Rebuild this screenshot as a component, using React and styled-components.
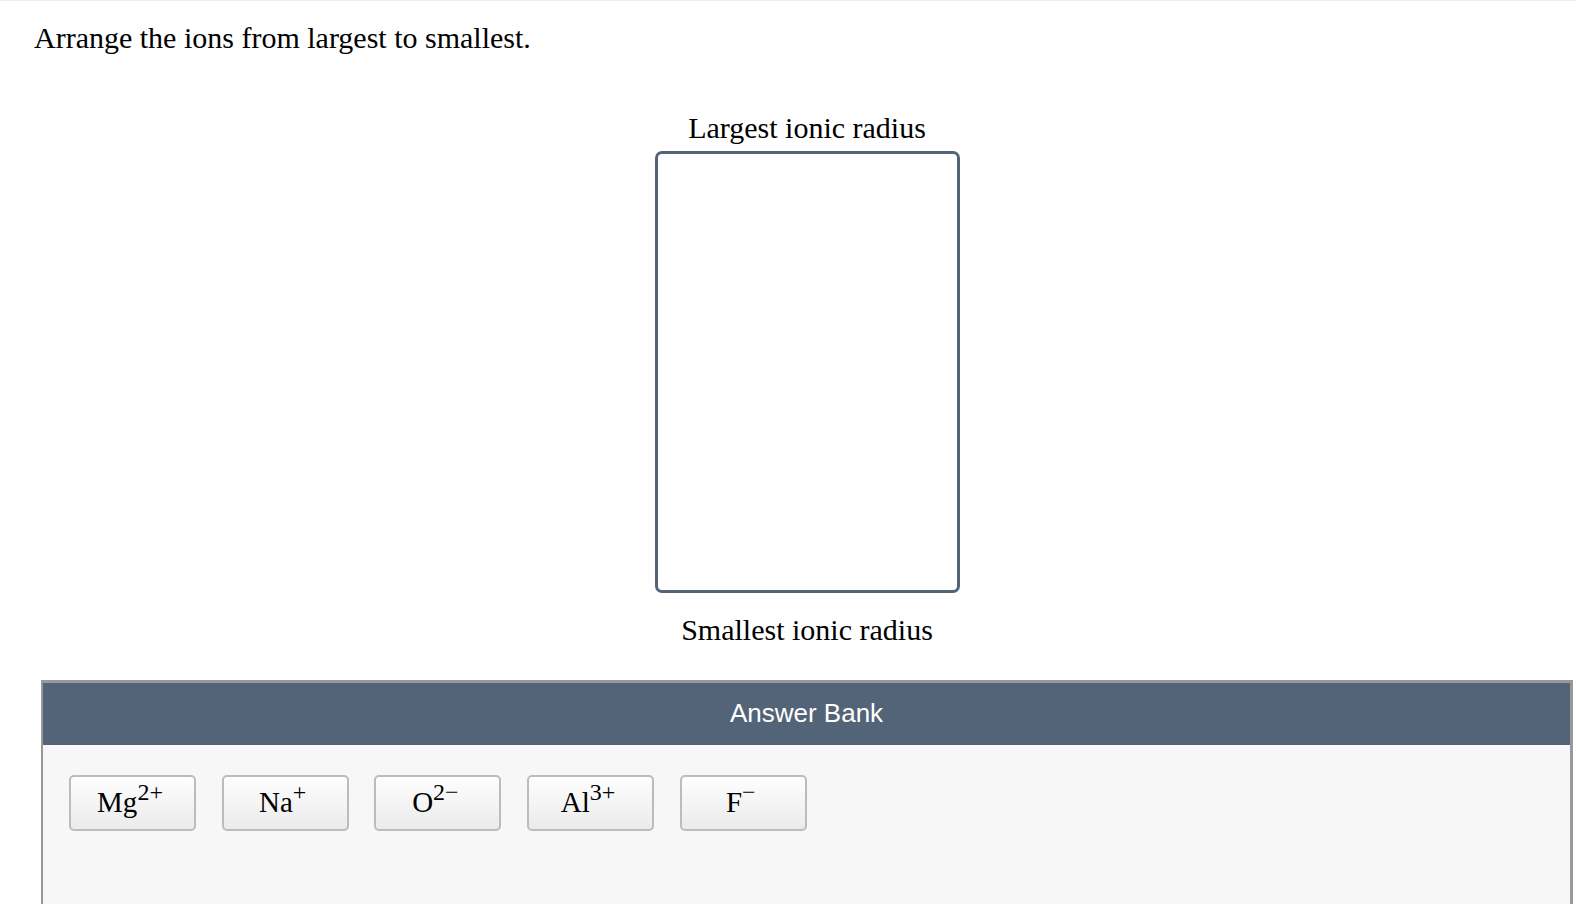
import React from "react";
import styled, { createGlobalStyle } from "styled-components";

const GlobalStyle = createGlobalStyle`
  html, body { margin: 0; padding: 0; background: #ffffff; }
  body { font-family: "Liberation Serif", "Times New Roman", serif; color: #000; }
  * { box-sizing: border-box; }
`;

const Page = styled.div`
  border-top: 1px solid #ececec;
  width: 1576px;
  height: 904px;
  overflow: hidden;
`;

const Prompt = styled.div`
  padding: 20px 0 0 34px;
  font-size: 30px;
  line-height: 34px;
`;

const Workspace = styled.div`
  margin: 0 3px 0 41px;
  display: flex;
  flex-direction: column;
`;

const Ranking = styled.div`
  display: flex;
  flex-direction: column;
  align-items: center;
  margin-top: 56px;
`;

const Label = styled.div`
  font-size: 30px;
  line-height: 34px;
  margin-top: ${(p) => p.$top || 0}px;
`;

const DropZone = styled.div`
  width: 305px;
  height: 442px;
  margin-top: 6px;
  border: 3px solid #536378;
  border-radius: 7px;
  background: #ffffff;
`;

const Bank = styled.div`
  margin-top: 33px;
  border-style: solid;
  border-color: #999999;
  border-width: 3px 3px 0 2px;
  background: #f7f7f7;
  min-height: 300px;
`;

const BankHeader = styled.div`
  height: 62px;
  background: #536378;
  color: #ffffff;
  font-family: "Liberation Sans", Arial, sans-serif;
  font-size: 26px;
  padding-bottom: 2px;
  display: flex;
  align-items: center;
  justify-content: center;
`;

const BankBody = styled.div`
  display: flex;
  gap: 25.7px;
  padding: 30px 26px;
`;

const Chip = styled.div`
  width: 127px;
  height: 56px;
  border: 2px solid #bcbcbc;
  border-radius: 5px;
  background: linear-gradient(#fefefe, #ebebeb);
  display: flex;
  align-items: center;
  justify-content: center;
  padding: 0 5px 2px 0;
`;

const Formula = styled.span`
  font-size: 29px;
  line-height: 32px;
  white-space: nowrap;
`;

const Sup = styled.span`
  font-size: 24px;
  line-height: 0;
  vertical-align: 12px;
`;

const ions = [
  ["Mg", "2+"],
  ["Na", "+"],
  ["O", "2\u2212"],
  ["Al", "3+"],
  ["F", "\u2212"],
];

export default function App() {
  return (
    <>
      <GlobalStyle />
      <Page>
        <Prompt>Arrange the ions from largest to smallest.</Prompt>
        <Workspace>
          <Ranking>
            <Label>Largest ionic radius</Label>
            <DropZone />
            <Label $top={20}>Smallest ionic radius</Label>
          </Ranking>
          <Bank>
            <BankHeader>Answer Bank</BankHeader>
            <BankBody>
              {ions.map(([el, ch]) => (
                <Chip key={el}>
                  <Formula>
                    {el}
                    <Sup>{ch}</Sup>
                  </Formula>
                </Chip>
              ))}
            </BankBody>
          </Bank>
        </Workspace>
      </Page>
    </>
  );
}
